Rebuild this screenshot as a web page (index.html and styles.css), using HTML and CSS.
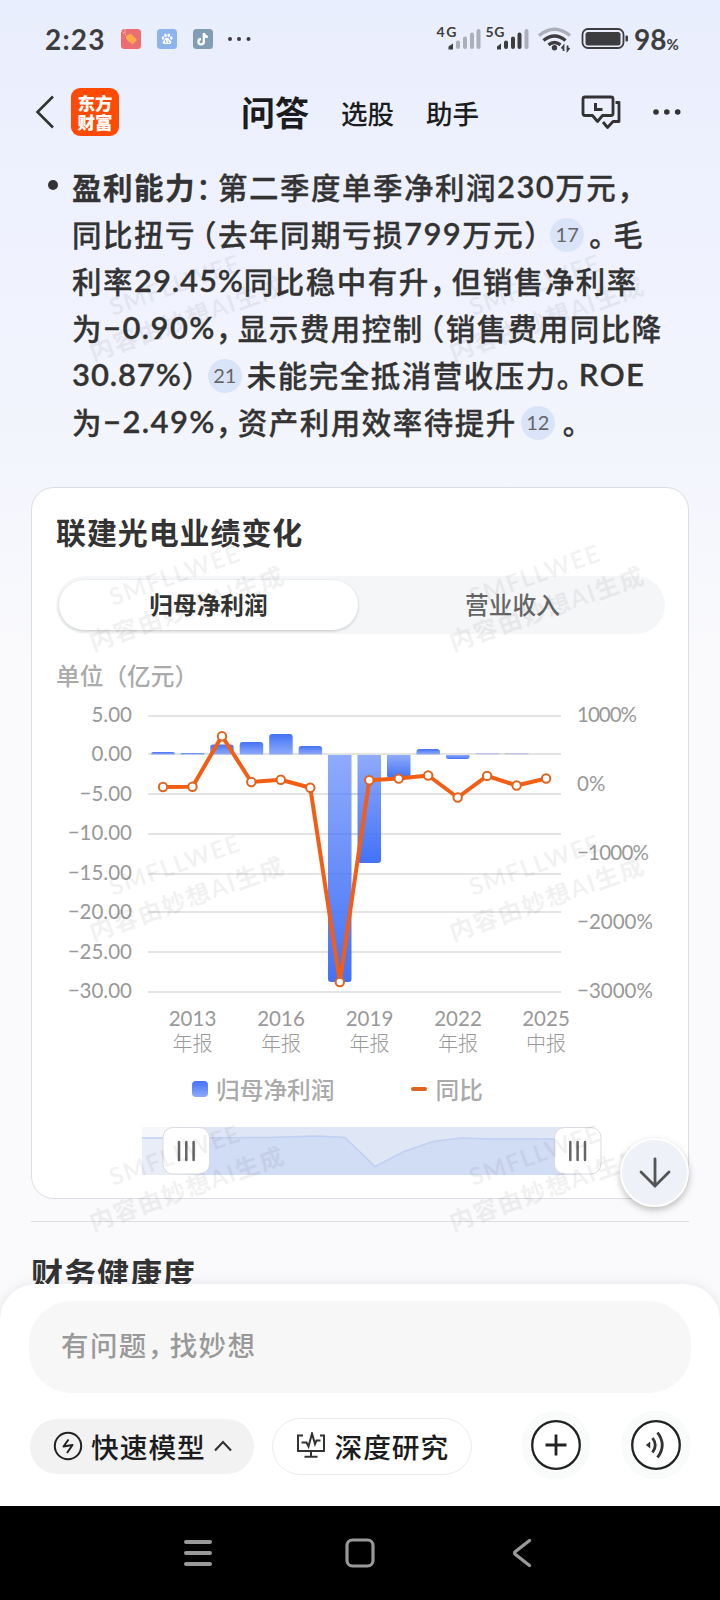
FILE: index.html
```html
<!DOCTYPE html>
<html lang="zh-CN">
<head>
  <meta charset="UTF-8">
  <meta name="viewport" content="width=device-width, initial-scale=1.0">
  <title>问答</title>
  <link rel="stylesheet" href="styles.css">
</head>
<body>
  <div class="app">
    <div class="status-bar">
      <span class="clock">2:23</span>
      <svg class="status-apps" width="132" height="22" viewBox="0 0 132 22">
        <rect x="0" y="1" width="20" height="20" rx="3.5" fill="#ec6d72"/>
        <path d="M5 8l5-2.500 6 6.500-4.500 4.500L5 11z" fill="#ffab4a"/>
        <path d="M0 3l5 4M4 1v5" stroke="#ffd0b0" stroke-width="1" stroke-dasharray="1.500 1"/>
        <rect x="36" y="1" width="20" height="20" rx="3.500" fill="#8cb5ee"/>
        <g fill="#fff">
          <ellipse cx="42" cy="10" rx="1.300" ry="1.800"/>
          <ellipse cx="44.500" cy="7.300" rx="1.300" ry="1.900"/>
          <ellipse cx="47.800" cy="7.300" rx="1.300" ry="1.900"/>
          <ellipse cx="50.300" cy="10" rx="1.300" ry="1.800"/>
          <path d="M46 9.800c2 0 2.300 2 3.800 3.200 1.200 1.300.5 3-1 3h-5.600c-1.500 0-2.200-1.700-1-3 1.500-1.200 1.800-3.200 3.800-3.200z"/>
        </g>
        <path d="M44.500 12v2.500h1.300M47.300 12.500v2h1.500" stroke="#8cb5ee" fill="none" stroke-width=".8"/>
        <rect x="72" y="1" width="20" height="20" rx="3.500" fill="#819db6"/>
        <path d="M82.800 5v8.700a2.700 2.700 0 1 1-2.800-2.700M82.800 5c.3 2.300 1.600 3.700 4 4" fill="none" stroke="#fff" stroke-width="2.300"/>
        <g fill="#3d3d40"><circle cx="109" cy="11" r="2"/><circle cx="118" cy="11" r="2"/><circle cx="127.500" cy="11" r="2"/></g>
      </svg>
      <svg class="status-signal" width="194" height="30" viewBox="434 24 194 30">
        <g class="net"><text x="436.500" y="37" textLength="20">4G</text><text x="485.500" y="37" textLength="19">5G</text></g>
        <g stroke="#acaeb9" stroke-width="4" stroke-linecap="round">
          <path d="M458 42.500v4.500M465 38.500v8.500M472 34.500v12.500M478.500 31v16M526.500 31v16"/>
        </g>
        <g stroke="#3d3d40" stroke-width="4" stroke-linecap="round">
          <path d="M506 42.500v4.500M513 38.500v8.500M519.500 34.500v12.500"/>
        </g>
        <path d="M448.500 49.500v-3l4.500-3v6zM497 49.500v-3l4-3v6z" fill="#3d3d40"/>
        <g fill="none" stroke-width="3.400">
          <path d="M539 35.500q15.500-12.500 31 0" stroke="#acaeb9"/>
          <path d="M543.500 40.500q11-9 22 0M548.500 44.800q6-4.500 12 0" stroke="#3d3d40"/>
        </g>
        <circle cx="554.500" cy="47.800" r="2.700" fill="#3d3d40"/>
        <path d="M563.500 51v-5l-2 2.500M567.500 45.500v5l2-2.500" stroke="#3d3d40" stroke-width="1.800" fill="none"/>
        <rect x="582.500" y="29" width="41" height="19" rx="5.500" fill="none" stroke="#3d3d40" stroke-width="1.800"/>
        <rect x="585.500" y="32" width="35" height="13.500" rx="2.500" fill="#3d3d40"/>
        <rect x="625.500" y="35.500" width="2.500" height="6" rx="1" fill="#3d3d40"/>
      </svg>
      <span class="battery">98<small>%</small></span>
    </div>

    <header class="topbar">
      <svg class="back" width="20" height="34" viewBox="0 0 20 34"><path d="M18 1.500L2.500 17 18 32.500" fill="none" stroke="#333" stroke-width="2.600"/></svg>
      <div class="logo"><span>东方</span><span>财富</span></div>
      <nav class="tabs">
        <span class="tab current">问答</span>
        <span class="tab">选股</span>
        <span class="tab">助手</span>
      </nav>
      <svg class="history" width="42" height="36" viewBox="580 93 42 36">
        <g fill="none" stroke="#333" stroke-width="2.800" stroke-linejoin="round">
          <path d="M585 96h26a2 2 0 0 1 2 2v14.500a2 2 0 0 1-2 2h-8.500l-5 6-5-6H585a2 2 0 0 1-2-2V98a2 2 0 0 1 2-2z"/>
          <path d="M615.500 101.500h3.500v19h-6l-5.500 6-4.500-5.500"/>
        </g>
        <path d="M595.500 102v6.500h7" fill="none" stroke="#333" stroke-width="3"/>
      </svg>
      <svg class="more" width="30" height="8" viewBox="0 0 30 8"><g fill="#333"><circle cx="4" cy="4" r="2.800"/><circle cx="14.800" cy="4" r="2.800"/><circle cx="25.700" cy="4" r="2.800"/></g></svg>
    </header>

    <main class="content">
      <div class="answer">
        <div class="line first"><b>盈利能力</b><i class="p">：</i>第二季度单季净利润<i class="n">230</i>万元，</div>
        <div class="line">同比扭亏<i class="p open">（</i>去年同期亏损<i class="n">799</i>万元<i class="p">）</i><span class="ref">17</span><i class="p stop">。</i>毛</div>
        <div class="line">利率<i class="n pct">29.45%</i>同比稳中有升<i class="p">，</i>但销售净利率</div>
        <div class="line">为<i class="n">−0.90%</i><i class="p">，</i>显示费用控制<i class="p open">（</i>销售费用同比降</div>
        <div class="line"><i class="n pct">30.87%</i><i class="p">）</i><span class="ref">21</span>未能完全抵消营收压力<i class="p">。</i><i class="n">ROE</i></div>
        <div class="line">为<i class="n">−2.49%</i><i class="p">，</i>资产利用效率待提升<span class="ref">12</span><i class="p stop end">。</i></div>
      </div>

      <section class="card">
        <h2>联建光电业绩变化</h2>
        <div class="switch">
          <span class="switch-item active">归母净利润</span>
          <span class="switch-item">营业收入</span>
        </div>
        <p class="unit">单位（亿元）</p>

        <svg class="chart" width="610" height="366" viewBox="56 700 610 366">
          <defs>
            <linearGradient id="up" x1="0" y1="0" x2="0" y2="1"><stop offset="0" stop-color="#4372f6"/><stop offset="1" stop-color="#8fabfb"/></linearGradient>
            <linearGradient id="down" x1="0" y1="0" x2="0" y2="1"><stop offset="0" stop-color="#8fabfb"/><stop offset="1" stop-color="#4372f6"/></linearGradient>
          </defs>
          <path class="grid" d="M148 716h413M148 754h413M148 794h413M148 834h413M148 874h413M148 912h413M148 952h413M148 992h413"/>
          <g fill="url(#up)">
            <path d="M151.300 754.500v-1q0-1.500 2-1.500h19.500q2 0 2 1.500v1z"/>
            <path d="M180.700 754.500v-1.300h23.500v1.300z"/>
            <path d="M210.200 754.500v-7q0-3 3-3h17.500q3 0 3 3v7z"/>
            <path d="M239.700 754.500v-9.500q0-3 3-3h17.500q3 0 3 3v9.500z"/>
            <path d="M269.200 754.500v-17.500q0-3 3-3h17.500q3 0 3 3v17.500z"/>
            <path d="M298.600 754.500v-5.500q0-3 3-3h17.500q3 0 3 3v5.500z"/>
            <path d="M416.500 754.500v-2.500q0-3 3-3h17.500q3 0 3 3v2.500z"/>
          </g>
          <g fill="url(#down)">
            <path d="M328 755h23.500v224q0 3-3 3h-17.500q-3 0-3-3z"/>
            <path d="M357.500 755h23.500v105q0 3-3 3h-17.500q-3 0-3-3z"/>
            <path d="M387 755h23.500v20q0 3-3 3h-17.500q-3 0-3-3z"/>
            <path d="M446 755h23.500v1.500q0 2.500-3 2.500h-17.500q-3 0-3-2.500z"/>
          </g>
          <path d="M475.500 753.700h23.500M505 753.700h23.500" stroke="#b9c5e2" stroke-width="1.300"/>
          <path class="grid over" d="M328 794h53M328 834h53M328 874h24M328 912h24M328 952h24"/>
          <polyline class="trend" points="163,787 192.500,786.700 222,736 251.300,782 280.800,779.800 310.300,787.800 339.800,982 369.300,780.300 398.700,778.600 428.200,775.500 457.700,797.500 487.100,775.900 516.600,785.500 546.100,778.500"/>
          <g class="dots">
            <circle cx="163" cy="787" r="4.200"/><circle cx="192.500" cy="786.700" r="4.200"/><circle cx="222" cy="736.300" r="4.200"/><circle cx="251.300" cy="782" r="4.200"/><circle cx="280.800" cy="779.800" r="4.200"/><circle cx="310.300" cy="787.800" r="4.200"/><circle cx="339.800" cy="982" r="4.200"/><circle cx="369.300" cy="780.300" r="4.200"/><circle cx="398.700" cy="778.600" r="4.200"/><circle cx="428.200" cy="775.500" r="4.200"/><circle cx="457.700" cy="797.500" r="4.200"/><circle cx="487.100" cy="775.900" r="4.200"/><circle cx="516.600" cy="785.500" r="4.200"/><circle cx="546.100" cy="778.500" r="4.200"/>
          </g>
          <g class="axis left">
            <text x="132" y="722">5.00</text><text x="132" y="761">0.00</text><text x="132" y="801">−5.00</text><text x="132" y="840">−10.00</text><text x="132" y="880">−15.00</text><text x="132" y="919">−20.00</text><text x="132" y="959">−25.00</text><text x="132" y="998">−30.00</text>
          </g>
          <g class="axis">
            <text x="577" y="722" textLength="60">1000%</text><text x="577" y="791">0%</text><text x="577" y="860" textLength="72">−1000%</text><text x="577" y="929">−2000%</text><text x="577" y="998">−3000%</text>
          </g>
          <g class="axis bottom">
            <text x="192.500" y="1026">2013</text><text x="281" y="1026">2016</text><text x="369.500" y="1026">2019</text><text x="458" y="1026">2022</text><text x="546" y="1026">2025</text>
          </g>
          <g class="axis bottom report">
            <text x="192.500" y="1051">年报</text><text x="281" y="1051">年报</text><text x="369.500" y="1051">年报</text><text x="458" y="1051">年报</text><text x="546" y="1051">中报</text>
          </g>
        </svg>

        <div class="legend">
          <span class="key bar-key">归母净利润</span>
          <span class="key line-key">同比</span>
        </div>

        <svg class="slider" width="610" height="50" viewBox="56 1126 610 50">
          <rect x="142" y="1127" width="44" height="48" fill="#f5f7fb"/>
          <rect x="142" y="1138" width="44" height="37" fill="#e8edf7"/>
          <rect x="186" y="1127" width="391" height="48" fill="#dfe6f5"/>
          <path d="M186 1138l82-.5 48-1.500 29 1.500 30 29 29-15 29-10 28-3.500 33 1h83V1175H186z" fill="#d1dcf5"/>
          <path d="M142 1138h44l82-.5 48-1.500 29 1.500 30 29 29-15 29-10 28-3.500 33 1h83" fill="none" stroke="#c0d0f0" stroke-width="1.500"/>
          <rect x="163" y="1127.500" width="46.500" height="46.500" rx="10" fill="#fff" stroke="#d9dbe0"/>
          <rect x="554.500" y="1127.500" width="46.500" height="46.500" rx="10" fill="#fff" stroke="#d9dbe0"/>
          <path d="M179 1142v18M186.300 1142v18M193.600 1142v18M570.300 1142v18M577.600 1142v18M585 1142v18" stroke="#666" stroke-width="2.500" stroke-linecap="round"/>
        </svg>
      </section>

      <hr class="divider">
      <h1 class="section-title">财务健康度</h1>
    </main>

    <footer class="composer">
      <div class="ask">有问题<i class="p">，</i>找妙想</div>
      <div class="tools">
        <span class="pill model">
          <svg width="30" height="30" viewBox="0 0 30 30"><circle cx="15" cy="15" r="13.200" fill="none" stroke="#222" stroke-width="2"/><path d="M15.500 8.500l-5 7 9-1.500-5.500 8" fill="none" stroke="#222" stroke-width="2" stroke-linejoin="round"/></svg>
          快速模型
          <svg class="caret" width="18" height="12" viewBox="0 0 18 12"><path d="M1 10.500L9 2l8 8.500" fill="none" stroke="#333" stroke-width="2.200"/></svg>
        </span>
        <span class="pill research">
          <svg width="30" height="28" viewBox="0 0 30 28"><path d="M7 3.500H2v15.500h26V3.500h-4M15 19v5.500M8.500 24.800h13M5.500 10.500h5l2 4 3.500-13 3 10.500 1.500-3.500h4" fill="none" stroke="#333" stroke-width="2"/></svg>
          深度研究
        </span>
        <svg class="round add" width="70" height="70" viewBox="0 0 70 70"><circle cx="35" cy="35" r="34.500" fill="#f9fafa"/><circle cx="35" cy="35" r="23.800" fill="#fff" stroke="#222" stroke-width="2.300"/><path d="M24.500 35h21M35 24.500v21" stroke="#222" stroke-width="2.800"/></svg>
        <svg class="round" width="70" height="70" viewBox="0 0 70 70"><circle cx="35" cy="35" r="34.500" fill="#f9fafa"/><circle cx="35" cy="35" r="23.800" fill="#fff" stroke="#222" stroke-width="2.300"/><path d="M26 35l2.500-2v4z" fill="#333" stroke="#333" stroke-width="1.500"/><path d="M31.500 28q5.500 7 0 14.500M36.500 22.500q9.500 12.500 0 25" fill="none" stroke="#333" stroke-width="2.800"/></svg>
      </div>
    </footer>

    <div class="navbar">
      <svg width="30" height="30" viewBox="0 0 30 30"><path d="M3 4h24M3 15h24M3 26h24" stroke="#999" stroke-width="4" stroke-linecap="round"/></svg>
      <svg width="30" height="30" viewBox="0 0 30 30"><rect x="2" y="2" width="26" height="26" rx="5.500" fill="none" stroke="#999" stroke-width="3.200"/></svg>
      <svg class="nav-back" width="20" height="30" viewBox="0 0 20 30"><path d="M17.500 2.500L3.500 13.500q-1.800 1.500 0 3L17.500 27.500" fill="none" stroke="#999" stroke-width="3.400" stroke-linecap="round"/></svg>
    </div>

    <svg class="watermark" width="720" height="1284" viewBox="0 0 720 1284">
      <defs>
        <g id="mark" transform="rotate(-19.500)">
          <text x="0" y="0" textLength="136">SMFLLWEE</text>
          <text x="-34" y="36" textLength="204">内容由妙想AI生成</text>
        </g>
      </defs>
      <use href="#mark" x="113" y="316"/><use href="#mark" x="473" y="316"/>
      <use href="#mark" x="113" y="606"/><use href="#mark" x="473" y="606"/>
      <use href="#mark" x="113" y="896"/><use href="#mark" x="473" y="896"/>
      <use href="#mark" x="113" y="1186"/><use href="#mark" x="473" y="1186"/>
    </svg>

    <div class="to-bottom">
      <svg width="32" height="32" viewBox="0 0 32 32"><path d="M16 2v27M2 15l14 14 14-14" fill="none" stroke="#555" stroke-width="2.800" stroke-linecap="round"/></svg>
    </div>
  </div>
</body>
</html>
```
FILE: styles.css
```css
* {
  box-sizing: border-box;
}

body {
  margin: 0;
  font-family: Lato, "Noto Sans CJK SC", sans-serif;
  color: #333;
}

i {
  font-style: normal;
}

svg {
  display: block;
  flex: none;
}

.app {
  position: relative;
  display: flex;
  flex-direction: column;
  width: 720px;
  height: 1600px;
  overflow: hidden;
  background: linear-gradient(#e8eefd 0, #ebeffd 60px, #eff2fe 240px, #f3f5fd 440px, #fafafc 670px);
}

/* System status bar */
.status-bar {
  display: flex;
  align-items: center;
  height: 78px;
  padding-left: 45px;
  color: #3d3d40;
}

.clock {
  width: 76px;
  font-size: 28px;
  font-weight: 700;
  letter-spacing: 1.2px;
}

.status-signal {
  margin-left: 181px;
}

.net {
  font-size: 14px;
  font-weight: 700;
  fill: #3d3d40;
}

.battery {
  margin-left: 6px;
  font-size: 28px;
  font-weight: 700;
}

.battery small {
  font-size: 15px;
}

/* Top bar */
.topbar {
  display: flex;
  align-items: center;
  height: 68px;
  padding-left: 35px;
}

.logo {
  display: flex;
  flex-direction: column;
  align-items: center;
  justify-content: center;
  width: 48px;
  height: 48px;
  margin-left: 16px;
  border-radius: 9px;
  background: #ff4a05;
  color: #fff;
  font: 900 17.5px/19px "Noto Sans CJK SC", sans-serif;
}

.tabs {
  display: flex;
  align-items: center;
  gap: 32px;
  width: 461px;
  padding-left: 122px;
}

.tab {
  font-size: 26.5px;
  font-weight: 500;
  line-height: 40px;
  color: #1b1c20;
  padding-top: 4px;
}

.tab.current {
  font-size: 34px;
  font-weight: 700;
  padding-top: 2px;
}

.more {
  margin-left: 30px;
}

/* Answer text */
.content {
  height: 1138px;
  padding: 16px 31px 0;
}

.answer {
  padding-left: 41px;
  font-size: 29.5px;
  font-weight: 500;
  letter-spacing: 1.5px;
  -webkit-text-stroke: 0.3px #333;
}

.line {
  display: flex;
  align-items: center;
  height: 47px;
  white-space: nowrap;
}

.line.first::before {
  content: "";
  width: 10px;
  height: 10px;
  margin: 0 14px 2px -24px;
  border-radius: 50%;
  background: #333;
}

.n {
  font-size: 31px;
  font-weight: 600;
  letter-spacing: 1.4px;
}

.n.pct {
  letter-spacing: 0.9px;
}

.p {
  width: 22px;
}

.open {
  display: flex;
  justify-content: flex-end;
}

.stop {
  width: 24px;
}

.stop.end {
  padding-left: 3px;
}

.ref {
  width: 34px;
  height: 34px;
  margin: 4px 5px 0 4px;
  border-radius: 50%;
  background: #dae4f8;
  color: #666;
  font-size: 20px;
  font-weight: 400;
  line-height: 33px;
  letter-spacing: 0;
  text-align: center;
  -webkit-text-stroke: 0;
}

/* Chart card */
.card {
  height: 712px;
  margin-top: 43px;
  padding: 22px 22px 0 24px;
  border: 1px solid #dcdde2;
  border-radius: 23px;
  background: #fff;
}

.card h2 {
  margin: 0;
  font-size: 30px;
  line-height: 44px;
  letter-spacing: 0.9px;
}

.switch {
  display: flex;
  width: 609px;
  height: 58px;
  margin-top: 22px;
  padding: 4px 3px;
  border-radius: 29px;
  background: #f5f6f8;
}

.switch-item {
  flex: 1;
  border-radius: 25px;
  color: #666;
  font-size: 23.7px;
  font-weight: 500;
  line-height: 51px;
  text-align: center;
  padding-left: 5px;
}

.switch-item.active {
  padding-left: 0;
  background: #fff;
  box-shadow: 0 1px 3px rgba(0, 0, 0, 0.2);
  color: #333;
  font-weight: 700;
}

.unit {
  height: 34px;
  margin: 25px 0 7px;
  color: #aaa;
  font-size: 23.7px;
  font-weight: 500;
  line-height: 34px;
}

.grid {
  stroke: #e4e4e5;
  stroke-width: 2;
}

.grid.over {
  stroke: #4a6fe0;
  opacity: 0.15;
}

.trend {
  fill: none;
  stroke: #f45d14;
  stroke-width: 4;
  stroke-linejoin: round;
}

.dots {
  fill: #fff;
  stroke: #e0631e;
  stroke-width: 2;
}

.axis {
  fill: #999;
  font-size: 20.5px;
}

.axis.left {
  text-anchor: end;
}

.axis.bottom {
  text-anchor: middle;
}

.axis.report {
  font-size: 20px;
  font-weight: 300;
}

.legend {
  display: flex;
  height: 46px;
  padding-left: 136px;
}

.key {
  display: flex;
  align-items: center;
  color: #aaa;
  font-size: 23.7px;
  font-weight: 500;
}

.key::before {
  content: "";
  width: 16px;
  height: 16px;
  margin-right: 8px;
  border-radius: 4px;
  background: linear-gradient(#4372f6, #8fabfb);
}

.line-key {
  margin-left: 77px;
}

.line-key::before {
  height: 4px;
  border-radius: 2px;
  background: #e0631e;
}

.slider {
  margin-top: 14px;
}

.divider {
  margin: 22px 0 0;
  border: 0;
  border-top: 1px solid #dcdde2;
}

.section-title {
  margin: 26px 0 0;
  font-size: 32px;
  line-height: 52px;
  letter-spacing: 1px;
}

/* Question input */
.composer {
  z-index: 2;
  height: 222px;
  padding: 17px 29px 0;
  border-radius: 36px 36px 0 0;
  background: #fff;
  box-shadow: 0 0 12px rgba(0, 0, 0, 0.09);
}

.ask {
  display: flex;
  height: 92px;
  padding-left: 32px;
  border-radius: 42px;
  background: #f7f7f7;
  color: #999;
  font-size: 27.5px;
  font-weight: 500;
  line-height: 90px;
  letter-spacing: 1.4px;
}

.tools {
  display: flex;
  align-items: center;
  margin-top: 17px;
  padding-left: 1px;
  color: #1b1c20;
  font-size: 27.7px;
  font-weight: 500;
  letter-spacing: 1px;
}

.pill {
  display: flex;
  align-items: center;
  gap: 8px;
  height: 55px;
  margin-top: 2px;
  border-radius: 29px;
  white-space: nowrap;
}

.model {
  width: 225px;
  padding-left: 23px;
  background: #f2f2f2;
}

.research {
  width: 200px;
  height: 57px;
  margin-left: 18px;
  padding-left: 23px;
  border: 1px solid #ececee;
}

.add {
  margin: 0 30px 0 49px;
}

/* System navigation */
.navbar {
  z-index: 2;
  display: flex;
  align-items: center;
  gap: 132px;
  height: 94px;
  padding-left: 183px;
  background: #000;
}

.nav-back {
  margin-left: 5px;
}

/* Overlays */
.watermark {
  position: absolute;
  top: 0;
  left: 0;
  fill: #000;
  opacity: 0.05;
  font-size: 24px;
  font-weight: 600;
  pointer-events: none;
}

.to-bottom {
  position: absolute;
  top: 1138px;
  left: 620px;
  display: flex;
  align-items: center;
  justify-content: center;
  width: 69px;
  height: 69px;
  border: 2px solid #fff;
  border-radius: 50%;
  background: #eef1f7;
  box-shadow: 0 3px 7px rgba(0, 0, 0, 0.25);
}
```
